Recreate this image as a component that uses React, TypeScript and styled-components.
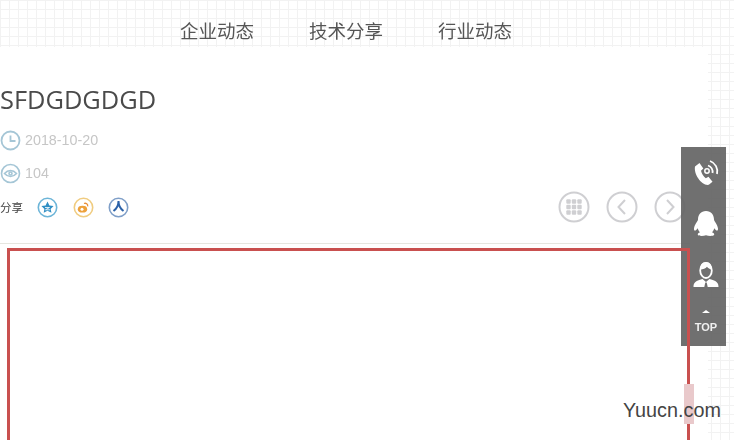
import React from 'react';
import styled, { createGlobalStyle } from 'styled-components';

const GlobalStyle = createGlobalStyle`
  html, body { margin: 0; padding: 0; background: #fff; }
  body { font-family: "Noto Sans CJK SC", "Liberation Sans", sans-serif; }
`;

const Page = styled.div`
  position: relative;
  width: 734px;
  height: 440px;
  overflow: hidden;
  background: #fff;
`;

// the whole shot is a bit soft, only the watermark stays crisp
const Canvas = styled.div`
  position: relative;
  height: 440px;
  filter: blur(0.5px);
  background-color: #fff;
  background-image:
    linear-gradient(#f2f2f2 1px, transparent 1px),
    linear-gradient(90deg, #f2f2f2 1px, transparent 1px);
  background-size: 9px 9px;
`;

const Nav = styled.nav`
  height: 47px;
  padding: 18px 0 0 180px;
  box-sizing: border-box;
  display: flex;
  gap: 55px;
`;

const NavItem = styled.a`
  font-size: 18.5px;
  font-weight: 400;
  line-height: 24px;
  color: #555;
`;

const Main = styled.main`
  width: 708px;
  height: 393px;
  background: #fff;
  display: flex;
  flex-direction: column;
`;

const Title = styled.h1`
  margin: 37px 0 0;
  font: 400 25.4px/30px "Open Sans", "Liberation Sans", sans-serif;
  color: #4a4a4a;
`;

const MetaRow = styled.div<{ $top: number }>`
  margin-top: ${(p) => p.$top}px;
  height: 22px;
  display: flex;
  align-items: center;
  gap: 4px;
  font: 400 14.3px/22px "Liberation Sans", sans-serif;
  color: #c6c6c6;
`;

const ShareRow = styled.div`
  margin-top: 10px;
  height: 26px;
  width: 690px;
  display: flex;
  align-items: center;
`;

const ShareLabel = styled.span`
  font-size: 11.5px;
  color: #444;
  width: 37px;
`;

const ShareIcons = styled.div`
  display: flex;
  gap: 14.5px;
  flex: 1;
`;

const Pager = styled.div`
  display: flex;
  gap: 16px;
  margin-right: 4px;
`;

const Divider = styled.hr`
  width: 690px;
  margin: 23px 0 0;
  border: 0;
  border-top: 1px solid #e6e6e0;
`;

const ContentFrame = styled.section`
  position: relative;
  z-index: 2;
  margin: 4px 0 0 7px;
  width: 677px;
  height: 300px;
  flex: none;
  border: 3px solid #c9504f;
`;

const SideBar = styled.aside`
  position: absolute;
  z-index: 1;
  left: 681px;
  top: 147px;
  width: 45px;
  height: 199px;
  padding-left: 5px;
  box-sizing: border-box;
  background: rgba(100, 100, 100, 0.92);
  display: flex;
  flex-direction: column;
  align-items: center;
  color: #f0f0f0;
`;

const SideSlot = styled.div<{ $h: number }>`
  height: ${(p) => p.$h}px;
  display: flex;
  align-items: center;
  justify-content: center;
`;

const TopLink = styled.div`
  margin-top: 11px;
  display: flex;
  flex-direction: column;
  align-items: center;
  gap: 8px;
  font: 700 11px/12px "Liberation Sans", sans-serif;
`;

const Caret = styled.span`
  width: 0;
  height: 0;
  border-left: 4px solid transparent;
  border-right: 4px solid transparent;
  border-bottom: 3px solid #fff;
`;

const Highlight = styled.div`
  position: absolute;
  z-index: 3;
  left: 684px;
  top: 384px;
  width: 10px;
  height: 40px;
  background: #e9c9cb;
`;

const Watermark = styled.div`
  position: absolute;
  left: 623px;
  top: 398px;
  font: 400 19.8px/24px "Liberation Sans", sans-serif;
  color: #444;
`;

const ClockIcon = () => (
  <svg width="21" height="21" viewBox="0 0 21 21" fill="none" stroke="#a5c6d6" strokeWidth="1.8">
    <circle cx="10.5" cy="10.5" r="9" />
    <path d="M10.5 5.5v5.5h5" />
  </svg>
);

const EyeIcon = () => (
  <svg width="21" height="21" viewBox="0 0 21 21" fill="none" stroke="#a5c6d6" strokeWidth="1.6">
    <circle cx="10.5" cy="10.5" r="9" />
    <path d="M4.5 10.5c3.5-4 8.5-4 12 0-3.5 4-8.5 4-12 0z" />
    <circle cx="10.5" cy="10.5" r="1.5" />
  </svg>
);

const QzoneIcon = () => (
  <svg width="21" height="21" viewBox="0 0 21 21">
    <circle cx="10.5" cy="10.5" r="9.2" fill="#fff" stroke="#6db5d8" strokeWidth="1.6" />
    <path d="M10.5 4.5l1.9 3.900 4.200.6-3 2.900.9 3.900-4-2-3.800 2 .7-3.900-3-2.900 4.200-.6z" fill="#2f8fc4" />
    <path d="M8 10.500h4.500l-4 2.300h4.500" fill="none" stroke="#fff" strokeWidth=".8" />
  </svg>
);

const WeiboIcon = () => (
  <svg width="21" height="21" viewBox="0 0 21 21">
    <circle cx="10.5" cy="10.5" r="9.2" fill="#fff" stroke="#f0cc80" strokeWidth="1.6" />
    <ellipse cx="9.5" cy="12.2" rx="4.7" ry="3.4" fill="#eda13c" />
    <circle cx="9" cy="12.3" r="1.5" fill="#fff" />
    <path d="M11 6.500c2-.8 4 .6 3.700 2.800" fill="none" stroke="#e9903a" strokeWidth="1.3" />
  </svg>
);

const RenrenIcon = () => (
  <svg width="21" height="21" viewBox="0 0 21 21" fill="none">
    <circle cx="10.5" cy="10.5" r="9.2" fill="#fff" stroke="#7f9fc8" strokeWidth="1.6" />
    <path d="M10.500 4c0 4-1.500 7.500-5 10M10.500 4c0 4 1.500 7.500 5 10" stroke="#2c62a8" strokeWidth="2" />
  </svg>
);

const RoundButton = ({ children }: { children: React.ReactNode }) => (
  <svg width="32" height="32" viewBox="0 0 32 32" fill="none" stroke="#cfcfd2" strokeWidth="2">
    <circle cx="16" cy="16" r="14.5" />
    {children}
  </svg>
);

const dots = [10.5, 16, 21.5];

const GridIcon = () => (
  <RoundButton>
    {dots.map((y) =>
      dots.map((x) => <rect key={`${x}-${y}`} x={x - 2.2} y={y - 2.2} width="4.4" height="4.4" rx="1" fill="#cfcfd2" stroke="none" />)
    )}
  </RoundButton>
);

const PhoneIcon = () => (
  <svg width="26" height="28" viewBox="0 0 26 28" fill="none">
    <path d="M2 7.500l4.500-3.500 3.800 5.500-2.300 2.300c.8 3 2.500 5.500 4.800 7.500l2.700-1.500 4 5-3.700 3C8.500 27 .5 15 2 7.500z" fill="#fff" />
    <path d="M15 6.500a6.500 6.500 0 0 1 4.500 7.500M17 2a11 11 0 0 1 7 13" stroke="#fff" strokeWidth="1.800" />
    <circle cx="14" cy="12" r="2.200" stroke="#fff" strokeWidth="1.500" />
  </svg>
);

const PenguinIcon = () => (
  <svg width="26" height="28" viewBox="0 0 26 28">
    <path d="M13 1c5.200 0 8 3.800 8 8.500 0 1.500 3.500 5 4 9 .2 1.500-.6 2.500-1.500 2-.8-.4-1.800-1.500-2.300-2.200-.3 1.700-1.200 3-2.200 3.900 1.400.5 2.500 1.200 2.200 2.500-.5 1.500-5.500 1.500-8.200.5-2.700 1-7.700 1-8.200-.5-.3-1.300.8-2 2.200-2.500-1-.9-1.900-2.200-2.200-3.900-.5.7-1.500 1.800-2.300 2.200-.9.500-1.700-.5-1.500-2 .5-4 4-7.500 4-9C5 4.800 7.800 1 13 1z" fill="#fff" />
  </svg>
);

const AgentIcon = () => (
  <svg width="26" height="28" viewBox="0 0 26 28">
    <path d="M0.500 27c0-4 1.500-6 9-8l3.500 3 3.500-3c7.500 2 9 4 9 8z" fill="#fff" />
    <ellipse cx="13" cy="10.500" rx="5.800" ry="7.500" fill="none" stroke="#fff" strokeWidth="1.800" />
    <path d="M7.200 9.500c3 0 5.300-1 6.800-2.800 1 1.500 2.800 2.400 4.800 2.800C19 5 17 2 13 2S7 5 7.200 9.500z" fill="#fff" />
    <path d="M12.300 22.500h1.400l1 4.500h-3.400z" fill="#6f6f6f" />
  </svg>
);

export default function App() {
  return (
    <>
      <GlobalStyle />
      <Page>
        <Canvas>
          <Nav>
            <NavItem>企业动态</NavItem>
            <NavItem>技术分享</NavItem>
            <NavItem>行业动态</NavItem>
          </Nav>
          <Main>
            <Title>SFDGDGDGD</Title>
            <MetaRow $top={15}>
              <ClockIcon />
              <span>2018-10-20</span>
            </MetaRow>
            <MetaRow $top={11}>
              <EyeIcon />
              <span>104</span>
            </MetaRow>
            <ShareRow>
              <ShareLabel>分享</ShareLabel>
              <ShareIcons>
                <QzoneIcon />
                <WeiboIcon />
                <RenrenIcon />
              </ShareIcons>
              <Pager>
                <GridIcon />
                <RoundButton>
                  <path d="M19 9l-6.500 7 6.500 7" />
                </RoundButton>
                <RoundButton>
                  <path d="M13 9l6.500 7-6.500 7" />
                </RoundButton>
              </Pager>
            </ShareRow>
            <Divider />
            <ContentFrame />
          </Main>
          <SideBar>
            <SideSlot $h={52}><PhoneIcon /></SideSlot>
            <SideSlot $h={50}><PenguinIcon /></SideSlot>
            <SideSlot $h={50}><AgentIcon /></SideSlot>
            <TopLink>
              <Caret />
              TOP
            </TopLink>
          </SideBar>
          <Highlight />
        </Canvas>
        <Watermark>Yuucn.com</Watermark>
      </Page>
    </>
  );
}
